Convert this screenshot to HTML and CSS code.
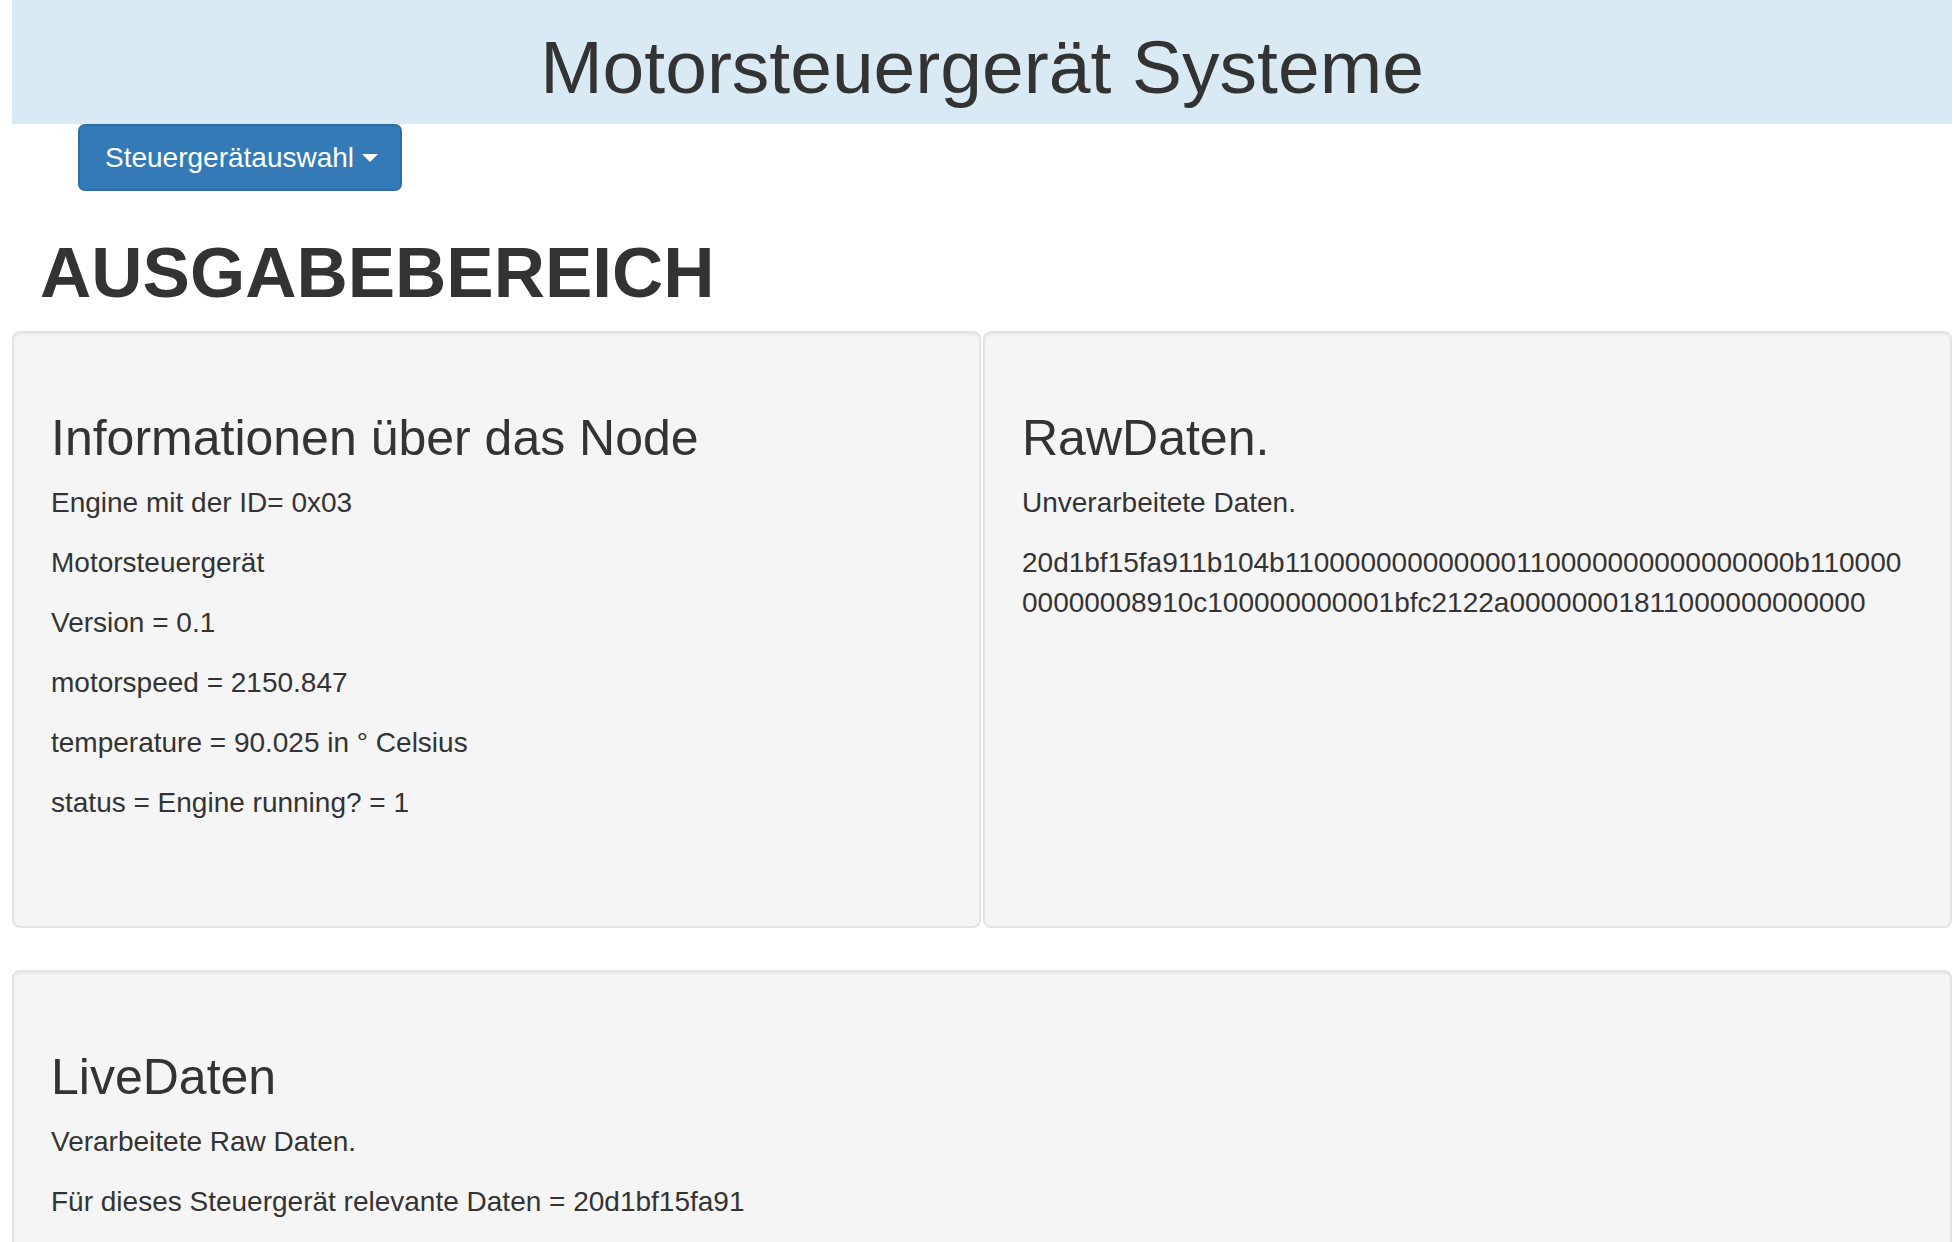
FILE: index.html
```html
<!DOCTYPE html>
<html lang="de">
<head>
<meta charset="utf-8">
<title>Motorsteuergerät Systeme</title>
<link rel="stylesheet" href="styles.css">
</head>
<body>
<header class="page-header">
  <h1 class="page-title">Motorsteuergerät Systeme</h1>
</header>
<div class="toolbar">
  <button class="btn-select" type="button">Steuergerätauswahl <span class="caret"></span></button>
</div>
<h1 class="section-title">AUSGABEBEREICH</h1>
<div class="well-row">
  <div class="well">
    <h2 class="well-title">Informationen über das Node</h2>
    <p>Engine mit der ID= 0x03</p>
    <p>Motorsteuergerät</p>
    <p>Version = 0.1</p>
    <p>motorspeed = 2150.847</p>
    <p>temperature = 90.025 in ° Celsius</p>
    <p>status = Engine running? = 1</p>
  </div>
  <div class="well">
    <h2 class="well-title">RawDaten.</h2>
    <p>Unverarbeitete Daten.</p>
    <p class="raw"><span class="raw-line">20d1bf15fa911b104b110000000000000110000000000000000b110000</span><span class="raw-line">00000008910c100000000001bfc2122a00000001811000000000000</span></p>
  </div>
</div>
<div class="well well-wide">
  <h2 class="well-title">LiveDaten</h2>
  <p>Verarbeitete Raw Daten.</p>
  <p>Für dieses Steuergerät relevante Daten = 20d1bf15fa91</p>
  <p>&nbsp;</p>
  <p>&nbsp;</p>
</div>
</body>
</html>
```
FILE: styles.css
```css
* {
  box-sizing: border-box;
}

html, body {
  background: #ffffff;
}

body {
  margin: 0 8px 0 12px;
  font-family: "Liberation Sans", Arial, Helvetica, sans-serif;
  font-size: 28px;
  line-height: 40px;
  color: #333333;
}

.page-header {
  height: 124px;
  padding-top: 26px;
  background: #d9eaf5;
  text-align: center;
}

.page-title {
  margin: 0;
  font-size: 75px;
  font-weight: normal;
  line-height: 1.1;
  color: #333333;
}

.toolbar {
  padding-left: 66px;
}

.btn-select {
  display: inline-block;
  margin: 0;
  height: 67px;
  padding: 12px 22px 12px 25px;
  font-family: "Liberation Sans", Arial, Helvetica, sans-serif;
  font-size: 28px;
  line-height: 40px;
  color: #ffffff;
  background: #337ab7;
  border: 2px solid #2e6da4;
  border-radius: 7px;
  cursor: pointer;
}

.caret {
  display: inline-block;
  width: 0;
  height: 0;
  margin-left: 0;
  vertical-align: middle;
  border-top: 8px solid #ffffff;
  border-left: 8px solid transparent;
  border-right: 8px solid transparent;
  position: relative;
  top: -2px;
}

.section-title {
  margin: 42px 0 19px;
  padding-left: 28px;
  font-size: 71px;
  font-weight: bold;
  line-height: 79px;
  color: #333333;
}

.well-row {
  display: flex;
  gap: 2px;
}

.well-row .well {
  flex: 1 1 0;
  min-width: 0;
  min-height: 597px;
}

.well {
  padding: 38px 34px 38px 37px;
  background: #f5f5f5;
  border: 2px solid #e3e3e3;
  border-radius: 8px;
  box-shadow: inset 0 2px 2px rgba(0, 0, 0, 0.05);
}

.well-wide {
  margin-top: 42px;
}

.well-title {
  margin: 40px 0 17px;
  font-size: 50px;
  font-weight: normal;
  line-height: 55px;
  color: #333333;
}

.well p {
  margin: 0 0 20px;
}

.raw-line {
  display: block;
  white-space: nowrap;
}
```
